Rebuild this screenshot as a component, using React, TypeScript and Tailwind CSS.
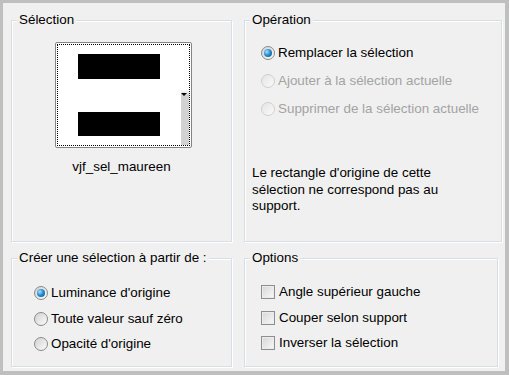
type RadioProps = { label: string; checked?: boolean; disabled?: boolean };

function Radio({ label, checked, disabled }: RadioProps) {
  return (
    <div className="flex h-[16px] items-center gap-[3px]">
      <span
        className={
          disabled
            ? "flex h-[14px] w-[14px] shrink-0 items-center justify-center rounded-full border border-[#cfcfcf] bg-gradient-to-br from-[#e4e4e4] to-[#fafafa]"
            : "flex h-[14px] w-[14px] shrink-0 items-center justify-center rounded-full border border-[#8a8a8a] bg-gradient-to-br from-[#d2d2d2] to-[#fbfbfb]"
        }
      >
        {checked && (
          <span className="h-[8px] w-[8px] rounded-full bg-[radial-gradient(circle_at_35%_35%,#a6e4ff_0%,#2a8fd0_45%,#0a4a78_100%)]" />
        )}
      </span>
      <span className={disabled ? "text-[#a3a3a3]" : "text-black"}>{label}</span>
    </div>
  );
}

function Check({ label }: { label: string }) {
  return (
    <div className="flex h-[16px] items-center gap-[4px]">
      <span className="h-[14px] w-[14px] shrink-0 border border-[#8e8e8e] bg-gradient-to-br from-[#d6d6d6] to-[#f9f9f9] shadow-[inset_0_0_0_1px_#ececec]" />
      <span className="text-black">{label}</span>
    </div>
  );
}

function Group({
  title,
  className,
  children,
}: {
  title: string;
  className: string;
  children: React.ReactNode;
}) {
  return (
    <div
      className={
        "relative border border-[#d5dfe5] shadow-[inset_1px_1px_0_#ffffff,1px_1px_0_#ffffff] " + className
      }
    >
      <span className="absolute -top-[9px] left-[5px] bg-[#f0f0f0] px-[2px] leading-[16px] text-black">
        {title}
      </span>
      {children}
    </div>
  );
}

export default function App() {
  return (
    <div className="h-[375px] w-[509px] bg-[#bfbfbf] pb-[4px] pl-[3px] pr-[4px] pt-[3px] font-['Liberation_Sans',Arial,sans-serif] text-[13.4px] leading-[16px]">
      <div className="flex h-full flex-col gap-[16px] bg-[#f0f0f0] pl-[8px] pt-[17px]">
        <div className="flex gap-[12px]">
          <Group title="Sélection" className="flex h-[222px] w-[221px] flex-col">
            <div className="ml-[43px] mt-[21px] h-[106px] w-[137px] rounded-[2px] border border-[#858585] bg-white p-[1px]">
              <div className="relative h-full w-full border border-dotted border-black">
                <div className="flex flex-col pl-[20px] pt-[9px]">
                  <div className="h-[25px] w-[82px] bg-black" />
                  <div className="mt-[33px] h-[24px] w-[82px] bg-black" />
                </div>
                <div className="absolute bottom-0 right-0 top-0 w-[8px] bg-gradient-to-b from-white from-45% to-[#d2d2d2] to-50%" />
                <div className="absolute right-[2px] top-[48px] h-0 w-0 border-l-[3px] border-r-[3px] border-t-[3px] border-l-transparent border-r-transparent border-t-black" />
              </div>
            </div>
            <div className="mt-[11px] self-center text-black">vjf_sel_maureen</div>
          </Group>
          <Group title="Opération" className="flex h-[222px] w-[258px] flex-col pl-[16px] pt-[24px]">
            <div className="flex flex-col gap-[12px]">
              <Radio label="Remplacer la sélection" checked />
              <Radio label="Ajouter à la sélection actuelle" disabled />
              <Radio label="Supprimer de la sélection actuelle" disabled />
            </div>
            <p className="-ml-[9px] mt-[48px] leading-[16.5px] text-black">
              Le rectangle d'origine de cette
              <br />
              sélection ne correspond pas au
              <br />
              support.
            </p>
          </Group>
        </div>
        <div className="flex gap-[12px]">
          <Group title="Créer une sélection à partir de :" className="flex h-[109px] w-[221px] flex-col gap-[9.5px] pl-[22px] pt-[26px]">
            <Radio label="Luminance d'origine" checked />
            <Radio label="Toute valeur sauf zéro" />
            <Radio label="Opacité d'origine" />
          </Group>
          <Group title="Options" className="flex h-[109px] w-[254px] flex-col gap-[9.5px] pl-[16px] pt-[25px]">
            <Check label="Angle supérieur gauche" />
            <Check label="Couper selon support" />
            <Check label="Inverser la sélection" />
          </Group>
        </div>
      </div>
    </div>
  );
}
